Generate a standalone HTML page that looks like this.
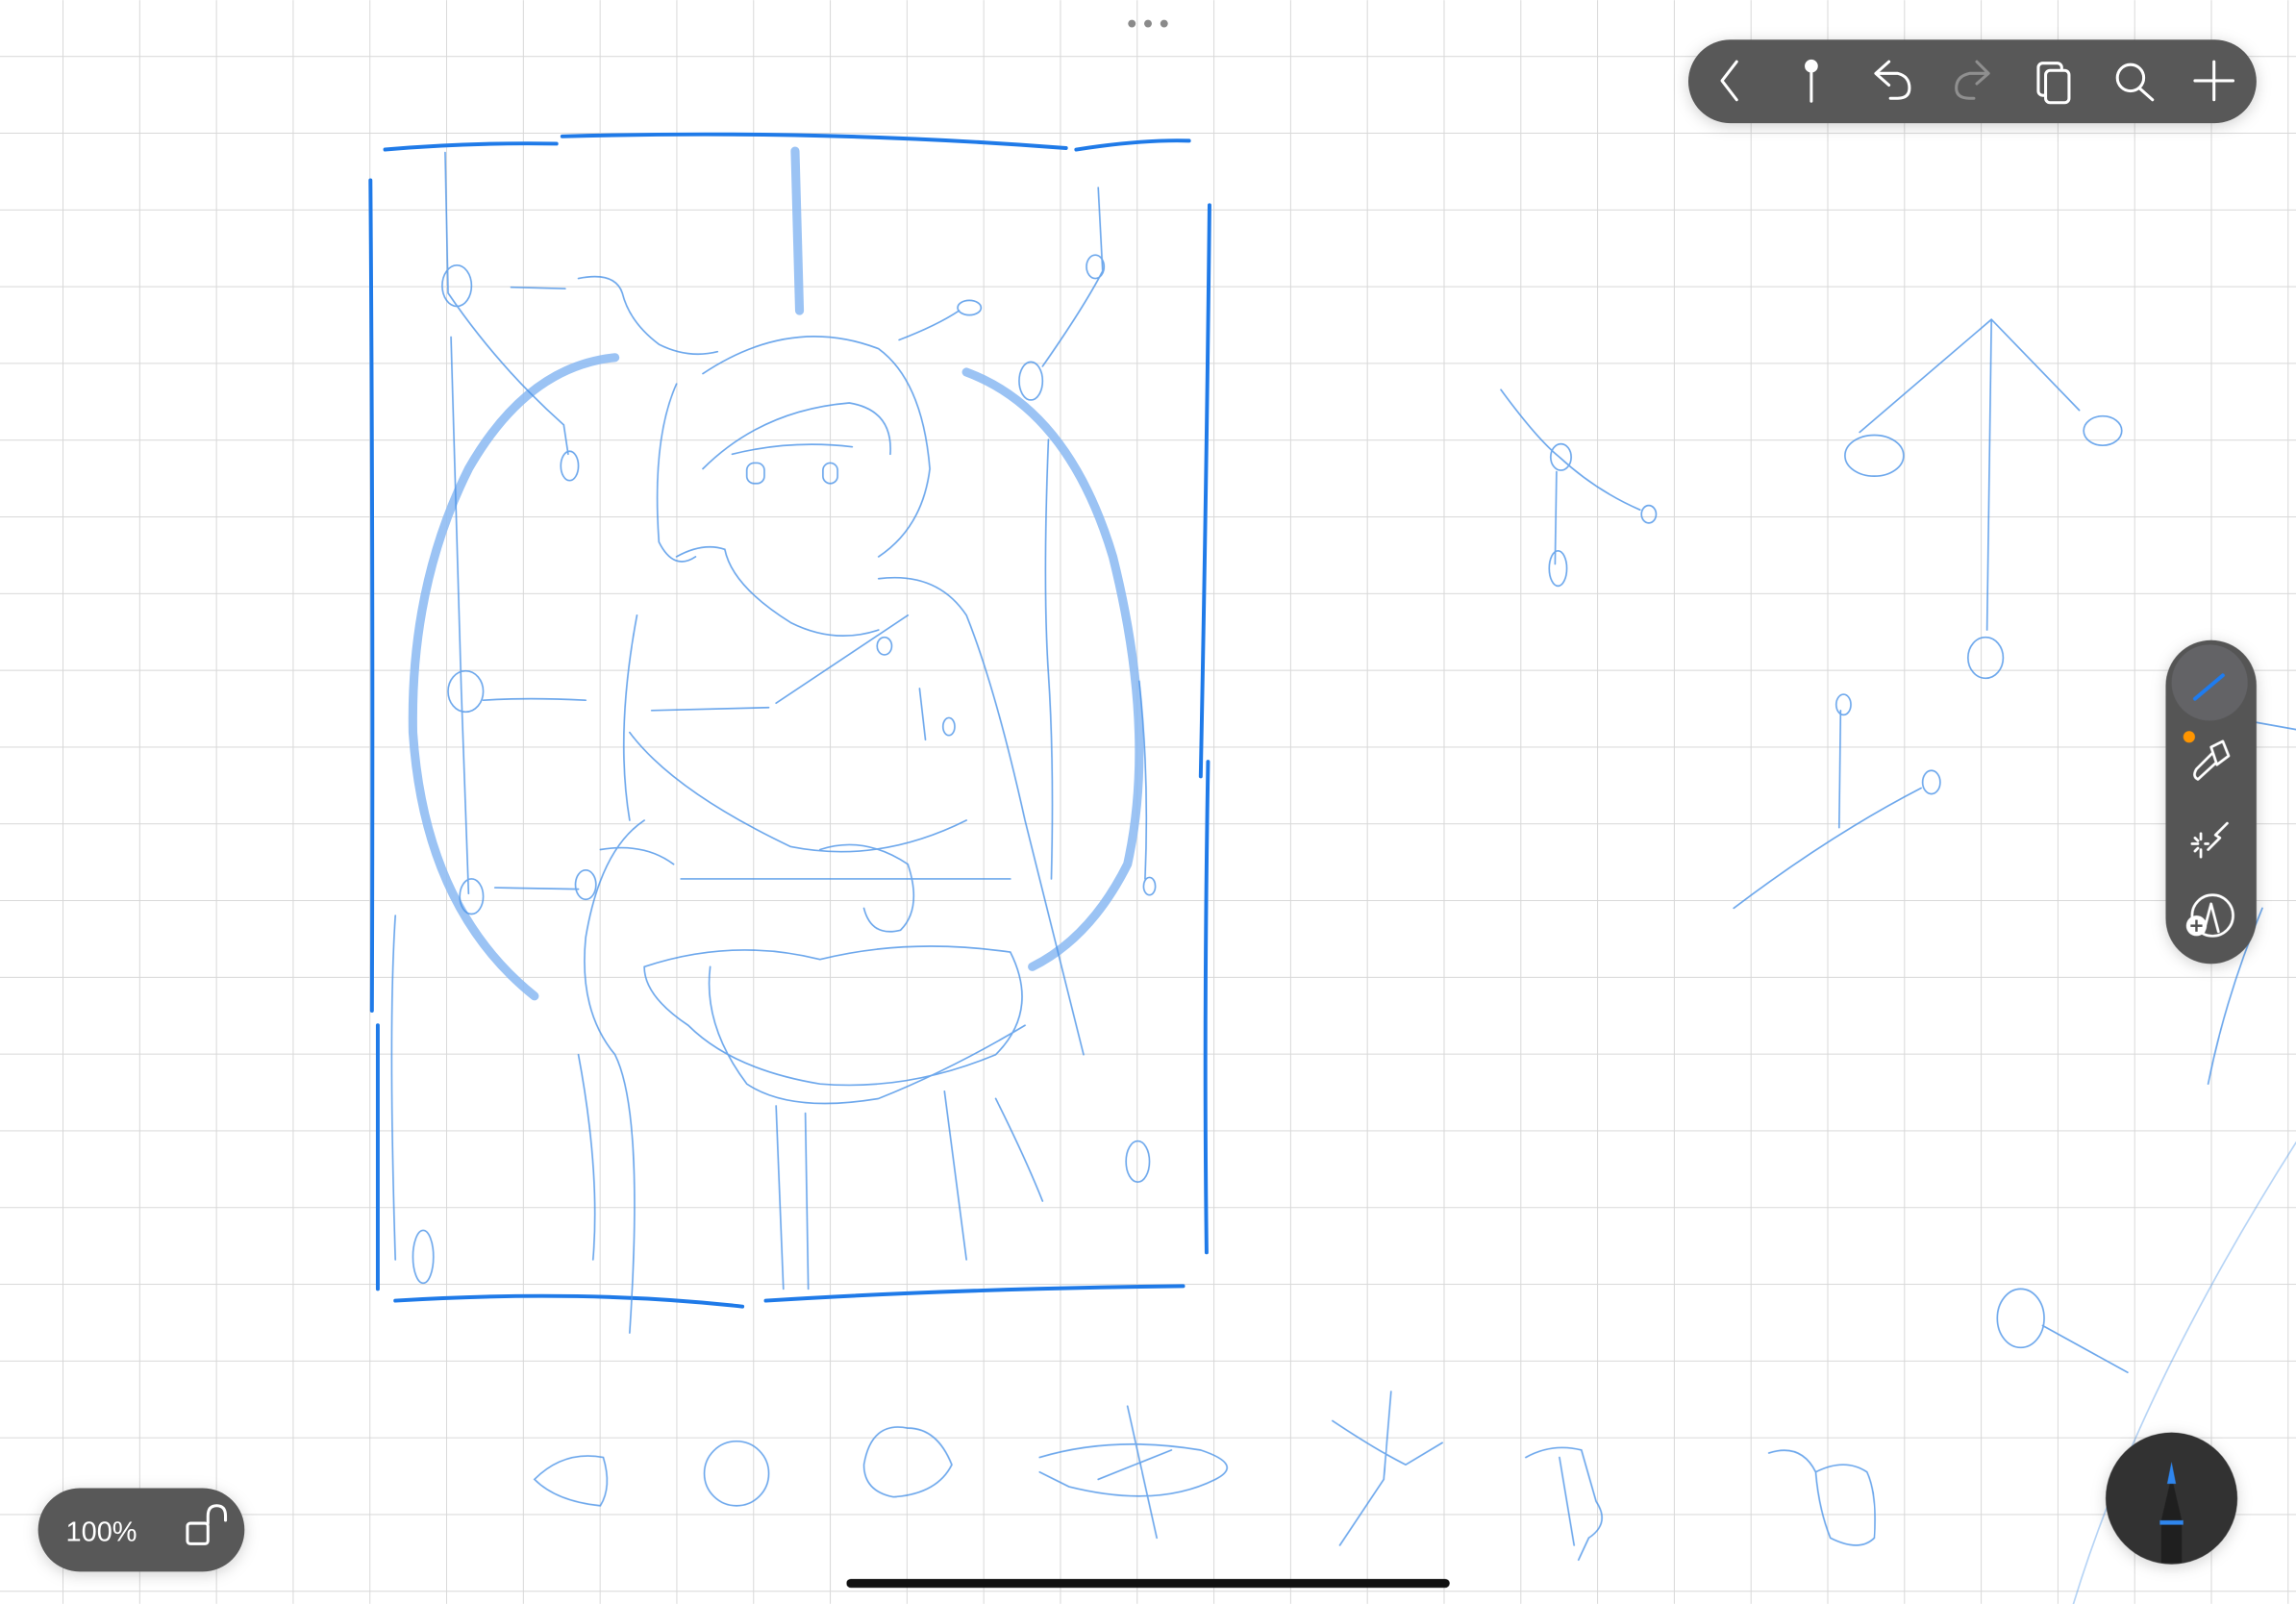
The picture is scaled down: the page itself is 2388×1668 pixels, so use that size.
<!DOCTYPE html>
<html><head><meta charset="utf-8"><style>
html,body{margin:0;padding:0;background:#fff;overflow:hidden}
body{width:2388px;height:1668px;position:relative;font-family:"Liberation Sans",sans-serif}
svg{position:absolute;left:0;top:0}
</style></head><body>
<svg width="2388" height="1668" viewBox="0 0 1568 1095" xmlns="http://www.w3.org/2000/svg">
<defs>
<pattern id="g" x="42.7" y="38.1" width="52.4" height="52.4" patternUnits="userSpaceOnUse">
<path d="M0 0H52.4M0 0V52.4" stroke="#d8d8d8" stroke-width="1.3" fill="none"/>
</pattern>
<filter id="sh" x="-20%" y="-50%" width="140%" height="200%"><feDropShadow dx="0" dy="2" stdDeviation="5" flood-opacity="0.18"/></filter>
</defs>
<rect width="1568" height="1095" fill="url(#g)"/>

<g stroke="#1f7ae8" stroke-width="2.6" fill="none" stroke-linecap="round">
<path d="M263 102 Q320 97 380 98"/>
<path d="M384 93 Q560 88 728 101"/>
<path d="M735 102 Q780 95 812 96"/>
<path d="M253 123 Q255 400 254 690"/>
<path d="M258 700 Q258 800 258 880"/>
<path d="M826 140 Q824 330 820 530"/>
<path d="M825 520 Q822 700 824 855"/>
<path d="M270 888 Q400 880 507 892"/>
<path d="M523 888 Q650 880 808 878"/>
</g>
<g stroke="#8ab9f2" stroke-width="6" fill="none" stroke-linecap="round" opacity="0.85">
<path d="M543 103 L546 212"/>
<path d="M420 244 Q360 250 320 320 Q280 400 282 500 Q290 620 365 680"/>
<path d="M660 254 Q730 280 760 380 Q790 500 770 590 Q745 640 705 660"/>
</g>
<g stroke="#4a93e8" stroke-width="1.1" fill="none" stroke-linecap="round" opacity="0.8">
<path d="M304 104 L306 200 Q340 250 385 290 L388 310"/>
<ellipse cx="389" cy="318" rx="6" ry="10"/>
<ellipse cx="312" cy="195" rx="10" ry="14"/>
<path d="M349 196 L386 197"/>
<path d="M395 190 Q420 185 425 200 Q430 220 450 235 Q470 245 490 240"/>
<path d="M308 230 L315 470 L320 610"/>
<ellipse cx="318" cy="472" rx="12" ry="14"/><ellipse cx="322" cy="612" rx="8" ry="12"/>
<path d="M330 478 Q360 476 400 478"/>
<path d="M338 606 L395 607"/>
<ellipse cx="400" cy="604" rx="7" ry="10"/>
<path d="M750 128 L753 185 Q740 210 712 250"/><ellipse cx="748" cy="182" rx="6" ry="8"/>
<ellipse cx="704" cy="260" rx="8" ry="13"/>
<path d="M614 232 Q640 222 655 212"/><ellipse cx="662" cy="210" rx="8" ry="5"/>
<path d="M480 255 Q540 215 600 238 Q630 260 635 320 Q630 360 600 380"/>
<path d="M462 262 Q445 300 450 370 Q460 390 475 380"/>
<path d="M480 320 Q520 280 580 275 Q610 280 608 310"/>
<path d="M500 310 Q540 300 582 305"/>
<rect x="510" y="316" width="12" height="14" rx="5"/>
<rect x="562" y="316" width="10" height="14" rx="5"/>
<path d="M462 380 Q480 370 495 375 Q500 400 540 425 Q570 440 600 430"/>
<path d="M435 420 Q420 500 430 560"/>
<path d="M600 395 Q640 390 660 420 Q680 470 700 560 Q720 640 740 720"/>
<path d="M445 485 L525 483"/>
<path d="M530 480 Q590 440 620 420"/>
<path d="M628 470 L632 505"/><ellipse cx="648" cy="496" rx="4" ry="6"/>
<ellipse cx="604" cy="441" rx="5" ry="6"/>
<path d="M430 500 Q460 540 540 578 Q600 590 660 560"/>
<path d="M440 560 Q410 580 400 640 Q395 690 420 720 Q440 760 430 910"/>
<path d="M410 580 Q440 575 460 590"/>
<path d="M465 600 L690 600"/>
<path d="M560 580 Q590 570 620 590 Q630 620 615 635 Q595 640 590 620"/>
<path d="M440 660 Q500 640 560 655 Q620 640 690 650 Q710 690 680 720 Q620 745 560 740 Q500 730 470 700 Q440 680 440 660"/>
<path d="M485 660 Q480 700 510 740 Q540 760 600 750 Q650 730 700 700"/>
<path d="M530 755 L535 880"/><path d="M550 760 L552 880"/>
<path d="M645 745 L660 860"/>
<path d="M395 720 Q410 800 405 860"/>
<path d="M270 625 Q265 700 270 860"/>
<path d="M716 300 Q712 400 716 460 Q720 520 718 600"/>
<path d="M778 465 Q785 530 782 600"/><ellipse cx="785" cy="605" rx="4" ry="6"/>
<ellipse cx="777" cy="793" rx="8" ry="14"/>
<ellipse cx="289" cy="858" rx="7" ry="18"/>
<path d="M680 750 Q700 790 712 820"/>
<path d="M1025 266 Q1050 300 1065 312 Q1090 335 1120 348"/>
<ellipse cx="1066" cy="312" rx="7" ry="9"/><ellipse cx="1126" cy="351" rx="5" ry="6"/>
<path d="M1063 322 L1062 385"/><ellipse cx="1064" cy="388" rx="6" ry="12"/>
<path d="M1360 218 L1270 295 M1360 218 L1420 280 M1360 218 L1357 430"/>
<ellipse cx="1280" cy="311" rx="20" ry="14"/>
<ellipse cx="1436" cy="294" rx="13" ry="10"/>
<ellipse cx="1356" cy="449" rx="12" ry="14"/>
<path d="M1257 485 L1256 565 M1184 620 Q1250 570 1312 538"/>
<ellipse cx="1259" cy="481" rx="5" ry="7"/><ellipse cx="1319" cy="534" rx="6" ry="8"/>
<ellipse cx="1380" cy="900" rx="16" ry="20"/>
<path d="M1395 905 L1453 937"/>
<path d="M1540 493 L1568 498"/>
<path d="M1545 620 Q1520 680 1508 740"/>
<path d="M1568 780 Q1460 950 1416 1095" opacity="0.5"/>
<path d="M412 995 Q385 990 365 1010 Q380 1025 410 1028 Q418 1015 412 995"/>
<ellipse cx="503" cy="1006" rx="22" ry="22"/>
<path d="M590 1000 Q595 970 620 975 Q640 975 650 1000 Q640 1020 610 1022 Q590 1018 590 1000"/>
<path d="M710 995 Q760 980 820 990 Q850 1000 830 1010 Q790 1030 730 1015 L710 1005 M770 960 L790 1050 M750 1010 L800 990"/>
<path d="M910 970 Q940 990 960 1000 L985 985 M950 950 L945 1010 L915 1055"/>
<path d="M1042 995 Q1060 985 1080 990 L1090 1025 Q1100 1040 1085 1050 L1078 1065 M1065 995 L1075 1055"/>
<path d="M1208 992 Q1230 985 1240 1005 Q1242 1030 1250 1050 Q1270 1060 1280 1050 Q1282 1020 1275 1005 Q1260 995 1240 1005"/>
</g>

<g fill="#8a8a8a"><circle cx="773" cy="16" r="2.6"/><circle cx="784" cy="16" r="2.6"/><circle cx="795" cy="16" r="2.6"/></g>

<rect x="1153" y="27" width="388" height="57" rx="28.5" fill="#595959" filter="url(#sh)"/>
<g stroke="#fff" stroke-width="2" fill="none" stroke-linecap="round" stroke-linejoin="round">
<path d="M1186 42 L1176 55 L1186 68"/>
<circle cx="1237" cy="45" r="3.5" fill="#fff"/><path d="M1237 48 L1237 69"/>
<path d="M1290 42 L1281 50 L1290 58 M1282 50 L1296 50 Q1304 52 1304 60 Q1304 67 1296 67 L1291 67"/>
<path d="M1350 42 L1358 50 L1350 57 M1357 50 L1345 50 Q1336 52 1336 60 Q1336 67 1345 67 L1348 67" stroke="#8f8f8f"/>
<rect x="1392" y="43" width="16" height="22" rx="3"/><rect x="1397" y="48" width="16" height="22" rx="3" fill="#595959"/>
<circle cx="1455" cy="53" r="9"/><path d="M1461 60 L1470 68"/>
<path d="M1512 42 L1512 68 M1499 55 L1525 55"/>
</g>

<rect x="1479" y="437" width="62" height="221" rx="31" fill="#555" filter="url(#sh)"/>
<circle cx="1509" cy="466" r="26" fill="#636366"/>
<path d="M1499 477 L1518 461" stroke="#1e7cf0" stroke-width="2.6" stroke-linecap="round"/>
<circle cx="1495" cy="503" r="4" fill="#ff9500"/>
<g stroke="#fff" stroke-width="1.8" fill="none" stroke-linecap="round" stroke-linejoin="round">
<path d="M1510 510 L1518 506 L1522 516 L1514 522 Z M1511 514 L1500 525 Q1497 530 1501 532 L1513 521"/>
<path d="M1521 562 L1513 570 L1516 572 L1508 580"/>
<path d="M1503 569 L1503 573 M1497 576 L1501 576 M1503 580 L1503 585 M1506 576 L1508 576 M1499 572 L1501 574 M1499 581 L1501 579"/>
<circle cx="1511" cy="625" r="14"/><path d="M1505 636 L1510 617 L1515 636"/>
</g>
<circle cx="1500" cy="632" r="7" fill="#fff"/>
<path d="M1500 628 V636 M1496 632 H1504" stroke="#555" stroke-width="1.6"/>

<rect x="26" y="1016" width="141" height="57" rx="28.5" fill="#595959" filter="url(#sh)"/>
<text x="45" y="1052" fill="#fff" font-size="19" font-family="Liberation Sans,sans-serif">100%</text>
<g stroke="#fff" stroke-width="2" fill="none"><rect x="128" y="1040" width="14" height="14" rx="2"/><path d="M142 1040 V1035 Q142 1028 148 1028 Q154 1028 154 1035 V1038" stroke-linecap="round"/></g>

<circle cx="1483" cy="1023" r="45" fill="#333" filter="url(#sh)"/>
<path d="M1476 1038 L1483 1008 L1490 1038 L1490 1067 L1476 1067 Z" fill="#1f1f1f"/>
<path d="M1480 1013 L1483 998 L1486 1013 Z" fill="#2f86ee"/>
<rect x="1475" y="1038" width="16" height="3" fill="#2f86ee"/>

<rect x="578" y="1078" width="412" height="6" rx="3" fill="#111"/>
</svg>
</body></html>
